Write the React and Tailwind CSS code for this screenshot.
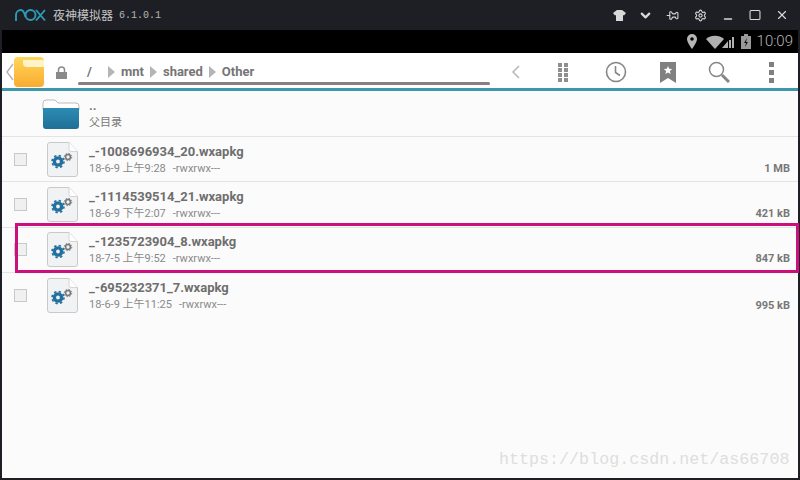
import React from 'react';
import { ChevronDown, Pin, Settings, Minus, Square, X } from 'lucide-react';

const files = [
  { name: '_-1008696934_20.wxapkg', date: '18-6-9 上午9:28', size: '1 MB' },
  { name: '_-1114539514_21.wxapkg', date: '18-6-9 下午2:07', size: '421 kB' },
  { name: '_-1235723904_8.wxapkg', date: '18-7-5 上午9:52', size: '847 kB' },
  { name: '_-695232371_7.wxapkg', date: '18-6-9 上午11:25', size: '995 kB' },
];

function NoxLogo() {
  return (
    <svg width="31" height="14" viewBox="0 0 31 14" fill="none" stroke="#2b9cb4" strokeWidth="1.900">
      <path d="M1 13V7a5 5 0 0 1 5-5c3 0 3.500 4 4.500 7" />
      <circle cx="15.500" cy="7" r="5" />
      <path d="M21 2l9 10.500M30 2l-9 10.500" />
    </svg>
  );
}

function GearFile() {
  return (
    <svg width="31" height="35" viewBox="0 0 31 35" className="shrink-0">
      <path d="M3 .5h19l8.5 9V32a2.500 2.500 0 0 1-2.500 2.500H3A2.500 2.500 0 0 1 .5 32V3A2.500 2.500 0 0 1 3 .5z" fill="#f1f2f3" stroke="#c9c9c9" />
      <path d="M22 .5v7a2 2 0 0 0 2 2h6.500" fill="#fff" stroke="#d4d4d4" />
      <circle cx="11" cy="19.500" r="3.600" fill="none" stroke="#236f9e" strokeWidth="3.400" />
      <circle cx="11" cy="19.500" r="6" fill="none" stroke="#236f9e" strokeWidth="1.600" strokeDasharray="2.400 2.300" />
      <circle cx="21" cy="15" r="2.400" fill="none" stroke="#777" strokeWidth="1.500" />
      <circle cx="21" cy="15" r="3.700" fill="none" stroke="#777" strokeWidth="1" strokeDasharray="1.500 1.400" />
    </svg>
  );
}

function Crumb() {
  return <span className="block shrink-0 w-0 h-0 border-y-[6px] border-y-transparent border-l-[7px] border-l-[#b5b5b5]" />;
}

export default function App() {
  return (
    <div className="w-[800px] h-[480px] flex flex-col bg-[#1d1f25] font-['Liberation_Sans',sans-serif] relative overflow-hidden">
      {/* emulator title bar */}
      <div className="h-[30px] shrink-0 flex items-center pl-[15px] pr-[11px]">
        <NoxLogo />
        <span className="ml-[7px] text-[12px] text-[#c5c5c5] font-['Noto_Sans_CJK_SC',sans-serif]">夜神模拟器</span>
        <span className="ml-[6px] text-[10px] text-[#b5b5b5] font-['Liberation_Mono',monospace]">6.1.0.1</span>
        <div className="ml-auto flex items-center text-[#d8d8d8]">
          <svg width="13" height="11" viewBox="0 0 13 11" fill="#d8d8d8"><path d="M4 0h5l4 3-2 2.500-1-.5v6H3V5l-1 .5L0 3z" /></svg>
          <ChevronDown size={15} strokeWidth={3.500} className="ml-[12px]" />
          <Pin size={13} className="ml-[13px] rotate-90" />
          <Settings size={13} className="ml-[15px]" />
          <Minus size={12} strokeWidth={3} className="ml-[15px] mt-[7px]" />
          <Square size={12} strokeWidth={2} className="ml-[15px] scale-x-110" />
          <X size={14} className="ml-[14px]" />
        </div>
      </div>
      {/* android status bar */}
      <div className="h-[23px] shrink-0 bg-black ml-[2px] mr-[2px] flex items-center justify-end pr-[5px] text-[#b0b0b0]">
        <svg width="10" height="15" viewBox="0 0 10 15">
          <path fillRule="evenodd" d="M5 0a5 5 0 0 1 5 5c0 3.500-5 10-5 10S0 8.500 0 5a5 5 0 0 1 5-5zm0 3.200a1.800 1.800 0 1 0 0 3.600 1.800 1.800 0 0 0 0-3.600z" fill="#b5b5b5" />
        </svg>
        <svg width="30" height="14" viewBox="0 0 30 14" className="ml-[9px]" fill="#b0b0b0">
          <path d="M0 4a14 14 0 0 1 18 0l-9 10z" />
          <path d="M22 13V6l-6 7zM23 13V5h2v8zM26 13V2h2v11z" />
        </svg>
        <svg width="10" height="15" viewBox="0 0 10 15" className="ml-[5px]">
          <path d="M0 2h3V0h4v2h3v13H0z" fill="#999" />
          <path d="M6 4L3 9h2l-1 4 3-5H5z" fill="#111" />
        </svg>
        <span className="ml-[6px] text-[15px] leading-none font-['Roboto',sans-serif] font-light text-[#b5b5b5]">10:09</span>
      </div>
      <div className="flex-1 mx-[2px] mb-[2px] flex flex-col bg-[#fbfbfb] min-h-0">
        {/* action bar */}
        <div className="h-[38px] shrink-0 pt-[3px] bg-white border-b-[3px] border-b-[#3f97ad] flex items-center relative">
          <svg width="8" height="18" viewBox="0 0 8 18" className="ml-[4px]" fill="none" stroke="#b5b5b5" strokeWidth="1.500"><path d="M7 1L1 9l6 8" /></svg>
          <div className="w-[30px] h-[30px] rounded-[4px] bg-gradient-to-b from-[#ffd65a] to-[#f9ab2e] relative overflow-hidden">
            <div className="absolute right-0 top-[3px] w-[21px] h-[7px] bg-[#fff3c8] rounded-bl-[4px]" />
          </div>
          <svg width="11" height="13" viewBox="0 0 11 13" className="ml-[12px]">
            <path d="M2.500 6V4a3 3 0 0 1 6 0v2" fill="none" stroke="#8a8a8a" strokeWidth="1.500" />
            <rect x="0" y="6" width="11" height="7" fill="#8a8a8a" />
          </svg>
          <div className="ml-[11px] w-[412px] h-[30px] flex items-center gap-[6px] text-[13px] font-bold text-[#757575] font-['Roboto',sans-serif] relative">
            <span className="w-[15px] ml-[9px]">/</span>
            <Crumb />
            <span>mnt</span>
            <Crumb />
            <span>shared</span>
            <Crumb />
            <span>Other</span>
            <div className="absolute left-0 right-0 bottom-[2px] h-[3px] bg-[#8b7d7d] rounded-full" />
          </div>
          <svg width="8" height="14" viewBox="0 0 8 14" className="ml-[22px]" fill="none" stroke="#b5b5b5" strokeWidth="1.500"><path d="M7 1L1 7l6 6" /></svg>
          <div className="ml-[38px] w-[11px] grid grid-cols-2 gap-[1px]">
            {[0, 1, 2, 3, 4, 5, 6, 7].map((i) => <span key={i} className="w-[4px] h-[4px] bg-[#8f8f8f]" />)}
          </div>
          <svg width="22" height="22" viewBox="0 0 22 22" className="ml-[36px]" fill="none" stroke="#868686" strokeWidth="1.600"><circle cx="11" cy="11" r="9.500" /><path d="M10.500 5v6.500l4.500 3" /></svg>
          <svg width="16" height="21" viewBox="0 0 16 21" className="ml-[33px]"><path d="M0 0h16v21l-8-5-8 5z" fill="#808080" /><path d="M8 4l1.200 2.800 3 .2-2.300 2 .7 3L8 10.400 5.400 12l.7-3-2.300-2 3-.2z" fill="#fff" /></svg>
          <svg width="22" height="22" viewBox="0 0 22 22" className="ml-[32px]" fill="none" stroke="#868686"><circle cx="8.500" cy="8.500" r="7" strokeWidth="1.500" /><path d="M14 14l7 7" strokeWidth="3" /></svg>
          <div className="ml-[39px] flex flex-col gap-[3px]">
            <span className="w-[5px] h-[5px] bg-[#808080]" />
            <span className="w-[5px] h-[5px] bg-[#808080]" />
            <span className="w-[5px] h-[5px] bg-[#808080]" />
          </div>
        </div>
        {/* parent folder row */}
        <div className="h-[46px] shrink-0 flex items-center border-b border-b-[#e4e4e4]">
          <svg width="38" height="30" viewBox="0 0 38 30" className="ml-[40px]">
            <defs>
              <linearGradient id="folderBlue" x1="0" y1="0" x2="0" y2="1">
                <stop offset="0" stopColor="#2d8cb4" />
                <stop offset="1" stopColor="#1f6f96" />
              </linearGradient>
            </defs>
            <path d="M1 4a3 3 0 0 1 3-3h9l3 3h18a3 3 0 0 1 3 3v4H1z" fill="#fff" stroke="#bbb" />
            <path d="M1 9h36v18a3 3 0 0 1-3 3H4a3 3 0 0 1-3-3z" fill="url(#folderBlue)" />
          </svg>
          <div className="ml-[9px] flex flex-col">
            <span className="text-[13px] leading-[14px] font-bold text-[#777] font-['Roboto',sans-serif]">..</span>
            <span className="text-[11px] leading-[16px] text-[#777] font-['Noto_Sans_CJK_SC',sans-serif]">父目录</span>
          </div>
        </div>
        {/* file rows */}
        {files.map((f) => (
          <div key={f.name} className="h-[45.300px] shrink-0 flex items-center border-b border-b-[#e4e4e4] last:border-b-0 relative">
            <span className="ml-[12px] w-[13px] h-[13px] border border-[#c8c8c8] bg-[#f0f0f0] shrink-0" />
            <span className="ml-[20px]"><GearFile /></span>
            <div className="ml-[11px] flex flex-col">
              <span className="text-[13px] leading-[17px] font-bold text-[#6e6e6e] font-['Roboto',sans-serif]">{f.name}</span>
              <span className="mt-[2px] text-[11px] leading-[14px] text-[#8a8a8a] font-['Roboto','Noto_Sans_CJK_SC',sans-serif]">
                {f.date}<span className="ml-[7px]">-rwxrwx---</span>
              </span>
            </div>
            <span className="absolute right-[8px] bottom-[4px] text-[11px] font-bold text-[#777] font-['Roboto',sans-serif]">{f.size}</span>
          </div>
        ))}
      </div>
      {/* annotation around the third file */}
      <div className="absolute left-[15px] top-[223px] w-[784px] h-[50px] border-[3px] border-[#cc0f7c]" />
      {/* blog watermark */}
      <span className="absolute left-[499px] top-[450px] text-[16.700px] leading-[20px] text-[#dedede] font-['Liberation_Mono',monospace]">https://blog.csdn.net/as66708</span>
    </div>
  );
}
